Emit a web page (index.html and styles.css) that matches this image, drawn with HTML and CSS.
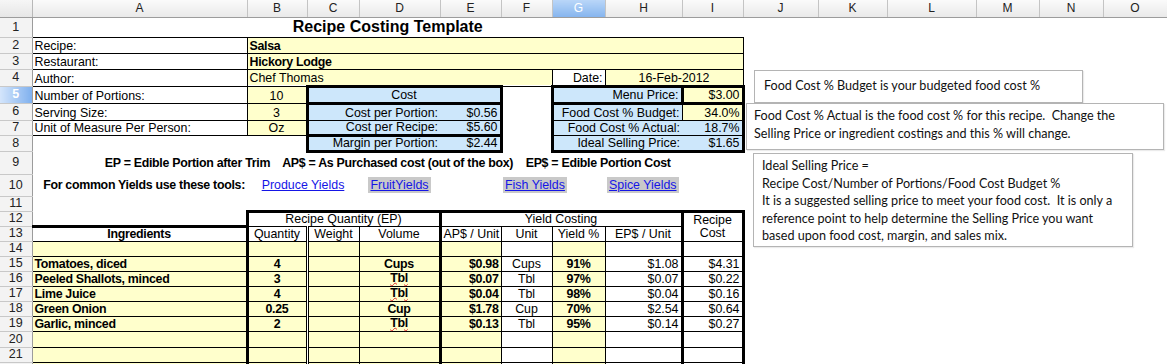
FILE: index.html
```html
<!DOCTYPE html>
<html>
<head>
<meta charset="utf-8">
<link rel="stylesheet" href="styles.css">
</head>
<body>
<div class="sheet">
<table class="grid">
<colgroup>
<col class="w32"><col class="w215"><col class="w60"><col class="w52"><col class="w81"><col class="w61"><col class="w51"><col class="w53"><col class="w77"><col class="w61"><col class="w75"><col class="w69"><col class="w89"><col class="w63"><col class="w64"><col class="w64">
</colgroup>
<tr class="h17">
<th class="corner"></th><th class="ch">A</th><th class="ch">B</th><th class="ch">C</th><th class="ch">D</th><th class="ch">E</th><th class="ch">F</th><th class="ch sel">G</th><th class="ch">H</th><th class="ch">I</th><th class="ch">J</th><th class="ch">K</th><th class="ch">L</th><th class="ch">M</th><th class="ch">N</th><th class="ch">O</th>
</tr>
<tr class="h20">
<th class="rh">1</th><td colspan="9" class="title">Recipe Costing Template</td><td colspan="6"></td>
</tr>
<tr class="h16">
<th class="rh">2</th><td class="bx">Recipe:</td><td colspan="8" class="bx y b">Salsa</td><td colspan="6"></td>
</tr>
<tr class="h16">
<th class="rh">3</th><td class="bx">Restaurant:</td><td colspan="8" class="bx y b">Hickory Lodge</td><td colspan="6"></td>
</tr>
<tr class="h17">
<th class="rh">4</th><td class="bx">Author:</td><td colspan="5" class="bx y">Chef Thomas</td><td class="bx r">Date:</td><td colspan="2" class="bx y c">16-Feb-2012</td><td colspan="6"></td>
</tr>
<tr class="h17">
<th class="rh rsel">5</th><td class="bx">Number of Portions:</td><td class="bx y c">10</td><td colspan="3" class="bl c k">Cost</td><td></td><td colspan="2" class="bl r k">Menu Price:</td><td class="y r k">$3.00</td><td colspan="6"></td>
</tr>
<tr class="h17">
<th class="rh">6</th><td class="bx">Serving Size:</td><td class="bx y c">3</td><td colspan="2" class="bl r kL tt">Cost per Portion:</td><td class="bl r kR tt">$0.56</td><td></td><td colspan="2" class="bl r kL tt tr">Food Cost % Budget:</td><td class="y r kR tt">34.0%</td><td colspan="6"></td>
</tr>
<tr class="h15">
<th class="rh">7</th><td class="bx">Unit of Measure Per Person:</td><td class="bx y c">Oz</td><td colspan="2" class="bl r kL kB">Cost per Recipe:</td><td class="bl r kR kB">$5.60</td><td></td><td colspan="2" class="bl r kL tt">Food Cost % Actual:</td><td class="bl r kR tt">18.7%</td><td colspan="6"></td>
</tr>
<tr class="h16">
<th class="rh">8</th><td></td><td></td><td colspan="2" class="bl r kL kB">Margin per Portion:</td><td class="bl r kR kB">$2.44</td><td></td><td colspan="2" class="bl r kL kB">Ideal Selling Price:</td><td class="bl r kR kB">$1.65</td><td colspan="6"></td>
</tr>
<tr class="h23">
<th class="rh">9</th><td colspan="9" class="c b pre mid">EP = Edible Portion after Trim    AP$ = As Purchased cost (out of the box)    EP$ = Edible Portion Cost</td><td colspan="6"></td>
</tr>
<tr class="h22">
<th class="rh">10</th><td class="r b mid">For common Yields use these tools:</td><td colspan="2" class="c mid"><span class="lk">Produce Yields</span></td><td class="c mid"><span class="lk hl">FruitYields</span></td><td></td><td colspan="2" class="mid"><span class="lk hl">Fish Yields</span></td><td class="mid"><span class="lk hl">Spice Yields</span></td><td></td><td colspan="6"></td>
</tr>
<tr class="h15">
<th class="rh">11</th><td colspan="15"></td>
</tr>
<tr class="h15">
<th class="rh">12</th><td></td><td colspan="3" class="c kT kL tb">Recipe Quantity (EP)</td><td colspan="4" class="c kT kL tb">Yield Costing</td><td rowspan="2" class="c kT kL kR tb mid wrap">Recipe<br>Cost</td><td colspan="6"></td>
</tr>
<tr class="h15">
<th class="rh">13</th><td class="c b bx kT">Ingredients</td><td class="c bx kL">Quantity</td><td class="c bx dbl">Weight</td><td class="c bx">Volume</td><td class="c bx kL">AP$ / Unit</td><td class="c bx">Unit</td><td class="c bx">Yield %</td><td class="c bx">EP$ / Unit</td><td colspan="6"></td>
</tr>
<tr class="h15">
<th class="rh">14</th><td class="y b bx"></td><td class="y b c bx kL"></td><td class="y bx dbl"></td><td class="y b c bx"></td><td class="y b r bx kL"></td><td class="c bx"></td><td class="y b c bx"></td><td class="r bx"></td><td class="r bx kL kR"></td><td colspan="6"></td>
</tr>
<tr class="h15">
<th class="rh">15</th><td class="y b bx">Tomatoes, diced</td><td class="y b c bx kL">4</td><td class="y bx dbl"></td><td class="y b c bx">Cups</td><td class="y b r bx kL">$0.98</td><td class="c bx">Cups</td><td class="y b c bx">91%</td><td class="r bx">$1.08</td><td class="r bx kL kR">$4.31</td><td colspan="6"></td>
</tr>
<tr class="h15">
<th class="rh">16</th><td class="y b bx">Peeled Shallots, minced</td><td class="y b c bx kL">3</td><td class="y bx dbl"></td><td class="y b c bx vis"><span class="sp">Tbl</span></td><td class="y b r bx kL">$0.07</td><td class="c bx">Tbl</td><td class="y b c bx">97%</td><td class="r bx">$0.07</td><td class="r bx kL kR">$0.22</td><td colspan="6"></td>
</tr>
<tr class="h15">
<th class="rh">17</th><td class="y b bx">Lime Juice</td><td class="y b c bx kL">4</td><td class="y bx dbl"></td><td class="y b c bx vis"><span class="sp">Tbl</span></td><td class="y b r bx kL">$0.04</td><td class="c bx">Tbl</td><td class="y b c bx">98%</td><td class="r bx">$0.04</td><td class="r bx kL kR">$0.16</td><td colspan="6"></td>
</tr>
<tr class="h15">
<th class="rh">18</th><td class="y b bx">Green Onion</td><td class="y b c bx kL">0.25</td><td class="y bx dbl"></td><td class="y b c bx">Cup</td><td class="y b r bx kL">$1.78</td><td class="c bx">Cup</td><td class="y b c bx">70%</td><td class="r bx">$2.54</td><td class="r bx kL kR">$0.64</td><td colspan="6"></td>
</tr>
<tr class="h15">
<th class="rh">19</th><td class="y b bx">Garlic, minced</td><td class="y b c bx kL">2</td><td class="y bx dbl"></td><td class="y b c bx vis"><span class="sp">Tbl</span></td><td class="y b r bx kL">$0.13</td><td class="c bx">Tbl</td><td class="y b c bx">95%</td><td class="r bx">$0.14</td><td class="r bx kL kR">$0.27</td><td colspan="6"></td>
</tr>
<tr class="h16">
<th class="rh">20</th><td class="y b bx"></td><td class="y b c bx kL"></td><td class="y bx dbl"></td><td class="y b c bx"></td><td class="y b r bx kL"></td><td class="c bx"></td><td class="y b c bx"></td><td class="r bx"></td><td class="r bx kL kR"></td><td colspan="6"></td>
</tr>
<tr class="h15">
<th class="rh">21</th><td class="y b bx"></td><td class="y b c bx kL"></td><td class="y bx dbl"></td><td class="y b c bx"></td><td class="y b r bx kL"></td><td class="c bx"></td><td class="y b c bx"></td><td class="r bx"></td><td class="r bx kL kR"></td><td colspan="6"></td>
</tr>
<tr class="h15">
<th class="rh"></th><td class="y b bx"></td><td class="y b c bx kL"></td><td class="y bx dbl"></td><td class="y b c bx"></td><td class="y b r bx kL"></td><td class="c bx"></td><td class="y b c bx"></td><td class="r bx"></td><td class="r bx kL kR"></td><td colspan="6"></td>
</tr>
</table>

<div class="note n1">Food Cost % Budget is your budgeted food cost %</div>
<div class="note n2">Food Cost % Actual is the food cost % for this recipe.&nbsp; Change the<br>Selling Price or ingredient costings and this % will change.</div>
<div class="note n3">Ideal Selling Price =<br>Recipe Cost/Number of Portions/Food Cost Budget %<br>It is a suggested selling price to meet your food cost.&nbsp; It is only a<br>reference point to help determine the Selling Price you want<br>based upon food cost, margin, and sales mix.</div>
</div>
</body>
</html>
```
FILE: styles.css
```css
* { box-sizing: border-box; }
body { margin: 0; background: #fff; }
.sheet { position: relative; width: 1167px; height: 364px; overflow: hidden; }

.grid {
  border-collapse: collapse;
  table-layout: fixed;
  width: 1167px;
  font-family: "Liberation Sans", Arial, sans-serif;
  font-size: 12.4px;
  color: #000;
}
.w32 { width: 32px; } .w215 { width: 215px; } .w60 { width: 60px; } .w52 { width: 52px; }
.w81 { width: 81px; } .w61 { width: 61px; } .w51 { width: 51px; } .w53 { width: 53px; }
.w77 { width: 77px; } .w75 { width: 75px; } .w69 { width: 69px; } .w89 { width: 89px; }
.w63 { width: 63px; } .w64 { width: 64px; }

.h15 { height: 15px; } .h16 { height: 16px; } .h17 { height: 17px; }
.h20 { height: 20px; } .h22 { height: 22px; } .h23 { height: 23px; }

td {
  padding: 0 2px;
  line-height: 13px;
  white-space: nowrap;
  overflow: hidden;
  vertical-align: bottom;
}
td.vis { overflow: visible; vertical-align: top; }

.corner {
  background: linear-gradient(#f6f6f6, #e6e6e6);
  border-right: 1px solid #b8b8b8;
  border-bottom: 1px solid #9c9c9c;
}
.ch {
  font-weight: normal;
  font-size: 12px;
  color: #222;
  background: linear-gradient(#fafafa, #e9e9e9);
  border-right: 1px solid #c4c4c4;
  border-bottom: 1px solid #9c9c9c;
  padding: 0;
  line-height: 15px;
}
.ch.sel {
  background: linear-gradient(#b9d6f8, #86b5ee);
  color: #fff;
}
.rh {
  font-weight: normal;
  font-size: 12.5px;
  color: #222;
  background: #f3f3f3;
  border-bottom: 1px solid #c8c8c8;
  border-right: 1px solid #9c9c9c;
  padding: 0;
  line-height: 13px;
  text-align: center;
}
.rh.rsel {
  background: linear-gradient(90deg, #d4e5fb, #7fb0ee);
  color: #fff;
  font-weight: bold;
}

.title { text-align: center; font-weight: bold; font-size: 16px; line-height: 18px; vertical-align: middle; letter-spacing: 0; }

.y { background: #ffffcc; }
.bl { background: #cde7fb; }
.c { text-align: center; }
.r { text-align: right; }
.b { font-weight: bold; letter-spacing: -0.3px; }
.pre { white-space: pre; }
.mid { vertical-align: middle; }
.wrap { white-space: normal; }

.bx { border: 1px solid #000; }
.tt { border-top: 1px solid #000; border-bottom: 1px solid #000; }
.tb { border-bottom: 1px solid #000; }
.tr { border-right: 1px solid #000; }
.k { border: 3px solid #000; }
.kT { border-top: 3px solid #000; }
.kB { border-bottom: 3px solid #000; }
.kL { border-left: 3px solid #000; }
.kR { border-right: 3px solid #000; }
.dbl { border-left: 3px double #000; }

.lk { color: #1515e6; text-decoration: underline; }
.hl { background: #c9c9c9; padding: 1px 2px; }
.sp { text-decoration: underline wavy #e03030; text-decoration-thickness: 1px; text-underline-offset: 0; }

.note {
  position: absolute;
  background: #fff;
  border: 1px solid #b4b4b4;
  box-shadow: 1px 1px 1px rgba(0,0,0,0.08);
  font-family: Lato, "Open Sans", sans-serif;
  font-size: 12.6px;
  color: #111;
  line-height: 17.6px;
  white-space: nowrap;
}
.n1 { left: 754px; top: 70px; width: 329px; height: 33px; padding: 6px 0 0 9px; }
.n2 { left: 746px; top: 103px; width: 418px; height: 47px; padding: 3px 0 0 7px; }
.n3 { left: 753px; top: 153px; width: 380px; height: 94px; padding: 3px 0 0 8px; }
```
